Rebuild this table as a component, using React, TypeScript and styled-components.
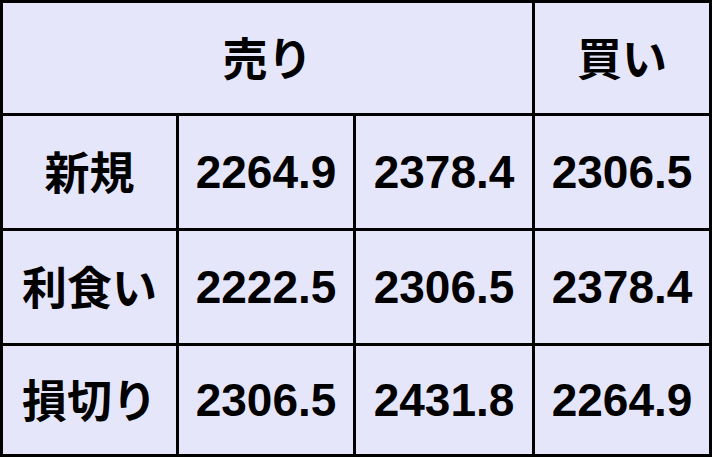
import { FC } from 'react';
import styled, { createGlobalStyle } from 'styled-components';

const GlobalStyle = createGlobalStyle`
  html, body {
    margin: 0;
    padding: 0;
    background: #ffffff;
  }
`;

const Board = styled.div`
  display: grid;
  grid-template-columns: 173px 174px 176px 174px;
  grid-template-rows: 110px 112px 112px 108px;
  gap: 3px;
  padding: 3px;
  width: 712px;
  height: 457px;
  box-sizing: border-box;
  background: #000000;
  font-family: 'Liberation Sans', 'Noto Sans CJK JP', Arial, sans-serif;
  font-weight: 700;
  color: #000000;
`;

const Cell = styled.div<{ $span?: number }>`
  grid-column: span ${({ $span }) => $span ?? 1};
  display: flex;
  align-items: center;
  justify-content: center;
  background: #e6e6fa;
  font-size: 46px;
  line-height: 1;
  white-space: nowrap;
`;

const LabelCell = styled(Cell)`
  font-family: 'Noto Sans CJK JP', sans-serif;
  font-size: 45px;
  font-weight: 600;
  padding-bottom: 3px;
`;

interface Row {
  label: string;
  values: string[];
}

const rows: Row[] = [
  { label: '新規', values: ['2264.9', '2378.4', '2306.5'] },
  { label: '利食い', values: ['2222.5', '2306.5', '2378.4'] },
  { label: '損切り', values: ['2306.5', '2431.8', '2264.9'] },
];

const App: FC = () => (
  <>
    <GlobalStyle />
    <Board>
      <LabelCell $span={3}>売り</LabelCell>
      <LabelCell>買い</LabelCell>
      {rows.map((row) => [
        <LabelCell key={row.label}>{row.label}</LabelCell>,
        ...row.values.map((v, i) => <Cell key={`${row.label}-${i}`}>{v}</Cell>),
      ])}
    </Board>
  </>
);

export default App;
